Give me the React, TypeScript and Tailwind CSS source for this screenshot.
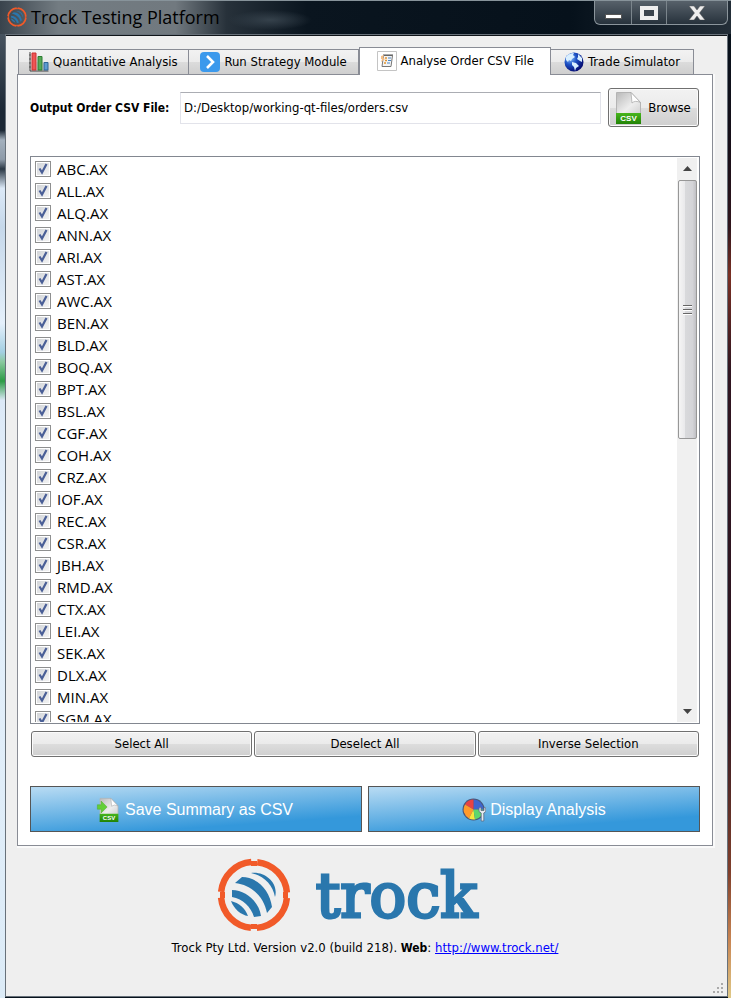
import { useState } from "react";

const SYMBOLS = [
  "ABC", "ALL", "ALQ", "ANN", "ARI", "AST", "AWC", "BEN", "BLD", "BOQ", "BPT", "BSL", "CGF",
  "COH", "CRZ", "IOF", "REC", "CSR", "JBH", "RMD", "CTX", "LEI", "SEK", "DLX", "MIN", "SGM",
].map((code) => `${code}.AX`);

function Emblem({ className }: { className: string }) {
  return (
    <svg viewBox="0 0 74 74" className={className} aria-hidden="true">
      <circle cx="37" cy="37" r="33" fill="none" stroke="#f15a29" strokeWidth="6.500" strokeDasharray="45.840 6" strokeDashoffset="-3" />
      <path d="M34 3h6v5h-6zM34 66h6v5h-6zM3 34h5v6H3zM66 34h5v6h-5z" fill="#f15a29" />
      <g fill="#2a77ad">
        <path d="M34 15C48 13 62 25 58 39C56 27 47 18 34 15Z" />
        <path d="M18 25L25 19C40 19 53 32 55 49L50 55C47 39 35 27 18 25Z" />
        <path d="M15 32C29 32 42 44 44 58L37 59C34 49 26 41 15 39Z" />
        <path d="M14 43C22 45 28 50 31 58C24 57 17 51 14 43Z" />
      </g>
    </svg>
  );
}

function ChartIcon() {
  return (
    <svg viewBox="0 0 20 20" className="size-5" aria-hidden="true">
      <path d="M1 0v19h18.500" stroke="#444" fill="none" />
      <path d="M0 3h2M0 7h2M0 11h2M0 15h2" stroke="#555" />
      <path d="M3 1h4v17H3z" fill="#ed5555" stroke="#c33" />
      <path d="M9 4.500h4V18H9z" fill="#55a957" stroke="#2d7d32" />
      <path d="M15 10.500h4V18h-4z" fill="#5c9bd1" stroke="#2c6595" />
    </svg>
  );
}

function ArrowIcon() {
  return (
    <svg viewBox="0 0 20 20" className="size-5" aria-hidden="true">
      <rect width="20" height="20" rx="4" fill="#3b99ec" />
      <path d="M7 4l6 6-6 6" fill="none" stroke="#fff" strokeWidth="2.600" />
    </svg>
  );
}

function ReportIcon() {
  return (
    <svg viewBox="0 0 20 20" className="size-5" aria-hidden="true">
      <path d="M.5.5h19v19H.5z" fill="#fff" stroke="#c4c4c4" />
      <path d="M6.500 4.500h9L14 15.500H5z" fill="#f4f4f4" stroke="#777" />
      <path d="M6 4h10" stroke="#555" />
      <path d="M8 7h2M8 9.500h2M7 12h2" stroke="#e29530" strokeWidth="1.500" />
      <path d="M11 7h3M11 9.500h3M10 12h3" stroke="#4b87c5" />
      <path d="M4 5l3-1-1 3 2 1-4 3 1-3H4z" fill="#f5bd83" />
    </svg>
  );
}

function GlobeIcon() {
  return (
    <svg viewBox="0 0 20 20" className="size-5" aria-hidden="true">
      <defs>
        <radialGradient id="globe" cx=".3" cy=".3" r=".75">
          <stop stopColor="#8cc5ff" />
          <stop offset=".45" stopColor="#1d51c4" />
          <stop offset="1" stopColor="#050b72" />
        </radialGradient>
      </defs>
      <circle cx="10" cy="10" r="9.500" fill="url(#globe)" />
      <path d="M2 5C4 2 7 1 10 1L9 3l2 2-3 2-1 2-2-1-1 2-2-2zM8 10l4 1 3 3-3 2-1 3-1-4-2-2zM14 2l4 4v4l-2-1-3-2 1-2z" fill="#d9efff" />
    </svg>
  );
}

function CsvIcon({ className, arrow = false }: { className: string; arrow?: boolean }) {
  return (
    <svg viewBox="0 0 25 32" className={className} aria-hidden="true">
      <defs>
        <linearGradient id="sheet" x2="1" y2="1">
          <stop stopColor="#b9b9b9" />
          <stop offset=".6" stopColor="#ededed" />
          <stop offset="1" stopColor="#d0d0d0" />
        </linearGradient>
        <linearGradient id="band" x2="0" y2="1">
          <stop stopColor="#47b51c" />
          <stop offset="1" stopColor="#218306" />
        </linearGradient>
      </defs>
      <path d="M.5.5H15l9.500 10V22H.5z" fill="url(#sheet)" stroke="#b4b4b4" />
      <path d="M15 .5l9.500 10Q19 8 16 11z" fill="#fff" stroke="#a5a5a5" strokeWidth=".7" />
      <path d="M0 21h25v11H0z" fill="url(#band)" />
      <text x="12.500" y="29" fontSize="8" fontWeight="700" fontFamily="Liberation Sans, sans-serif" textAnchor="middle" fill="#fff">CSV</text>
      {arrow && <path d="M-3 9h5V4l8 8-8 8v-5h-5z" fill="#62cf36" stroke="#4ca82a" strokeWidth=".6" />}
    </svg>
  );
}

function PieIcon() {
  return (
    <svg viewBox="0 0 24 24" className="size-6" aria-hidden="true">
      <circle cx="11.500" cy="11.500" r="11" fill="#49577a" />
      <path d="M11.500 11.500V1.500A10 10 0 0 1 21.500 11.500z" fill="#3e65cd" />
      <path d="M11.500 11.500L3 6.500A10 10 0 0 1 11.500 1.500z" fill="#e74343" />
      <path d="M11.500 11.500L7 20.400A10 10 0 0 1 3 6.500z" fill="#ff9a2b" />
      <path d="M11.500 11.500L13 21.400A10 10 0 0 1 7 20.400z" fill="#f7e73c" />
      <path d="M11.500 11.500H21.500A10 10 0 0 1 13 21.400z" fill="#5ed66d" />
      <path d="M17 10v3.500l2.200 1.500v8h2.600v-8l2-1.500V10l-1.800-1v3.500h-3V9z" fill="#e6eaf0" stroke="#5c6b80" strokeWidth=".8" />
    </svg>
  );
}

const TABS = [
  { label: "Quantitative Analysis", icon: <ChartIcon />, grow: "grow-[170]" },
  { label: "Run Strategy Module", icon: <ArrowIcon />, grow: "grow-[171]" },
  { label: "Analyse Order CSV File", icon: <ReportIcon />, grow: "grow-[191]" },
  { label: "Trade Simulator", icon: <GlobeIcon />, grow: "grow-[143]" },
];

const GREY_BUTTON =
  "flex items-center justify-center rounded-[3px] border border-[#707070] bg-[linear-gradient(#f2f2f2,#ebebeb_50%,#dddddd_50%,#cfcfcf)] shadow-[inset_0_0_0_1px_#fbfbfb]";
const BLUE_BUTTON =
  "flex h-[46px] flex-1 items-center justify-center border border-[#555] bg-[linear-gradient(356deg,#3498db_22%,#b2d8f2_96%)] pt-px font-['Liberation_Sans',Arial,sans-serif] text-base text-white";

export default function App() {
  const [activeTab, setActiveTab] = useState(2);
  const [checked, setChecked] = useState<boolean[]>(SYMBOLS.map(() => true));
  const [path, setPath] = useState("D:/Desktop/working-qt-files/orders.csv");

  return (
    <div className="flex h-screen min-h-[600px] flex-col overflow-hidden bg-[#07121c] font-['DejaVu_Sans_Condensed','DejaVu_Sans',sans-serif] text-[13px] text-black">
      <header className="flex h-[34px] shrink-0 items-start justify-between border-t border-[#87939a] bg-[radial-gradient(ellipse_42px_10px_at_270px_19px,#35414b,transparent),linear-gradient(90deg,#39434c,#737c82_8%,#71797f_24%,#27313a_31%,#0a151f_42%,#06111b_78%,#232e38)] pl-[7px] pr-[3px]">
        <div className="flex h-8 items-center gap-1">
          <Emblem className="size-5" />
          <h1 className="font-['Open_Sans','Noto_Sans',sans-serif] text-lg">Trock Testing Platform</h1>
        </div>
        <div className="flex h-6 rounded-b-md border border-t-0 border-[#8b959c] bg-[linear-gradient(#57616a,#27323c)]">
          <button aria-label="Minimise" className="flex w-[37px] items-end justify-center border-r border-[#7b858c] pb-[5px]">
            <span className="h-[5px] w-[17px] border border-[#555] bg-white" />
          </button>
          <button aria-label="Maximise" className="flex w-[35px] items-center justify-center border-r border-[#7b858c]">
            <span className="h-[14px] w-[18px] border-4 border-[#eee] bg-[#3b444d]" />
          </button>
          <button aria-label="Close" className="flex w-[60px] items-center justify-center">
            <svg viewBox="0 0 18 14" className="h-[14px] w-[18px]" aria-hidden="true">
              <path d="M1 0h5l3 4 3-4h5l-5.500 7L17 14h-5l-3-4-3 4H1l5.500-7z" fill="#eee" stroke="#555" strokeWidth=".5" />
            </svg>
          </button>
        </div>
      </header>

      <div className="flex min-h-0 flex-1">
        <div className="w-[5px] shrink-0 bg-[linear-gradient(#47535f,#1c2835_8%,#1c2835_10%,#a3b0bd_11%,#8d9aa8_13%,#2a3744_14%,#dce9f7_16%,#c6d8ea_20%,#e5f0fb_30%,#a3cfe2_33%,#8ac99f_34%,#2c9b45_36%,#dce9f7_38%,#e5f0fb_50%,#dcebf7)]" />
        <main className="relative mb-px flex min-w-0 flex-1 flex-col border border-[#68717a] bg-[#efefef] pl-[11px] pr-[14px] shadow-[inset_0_1px_0_#10151a]">
          <div role="tablist" className="relative z-10 -mb-px ml-px mr-[19px] mt-3 flex h-[28px] shrink-0 items-end">
            {TABS.map((tab, index) => {
              const active = index === activeTab;
              return (
                <button
                  key={tab.label}
                  role="tab"
                  aria-selected={active}
                  onClick={() => setActiveTab(index)}
                  className={`flex basis-0 items-center justify-center gap-[4px] whitespace-nowrap border border-[#898c95] ${tab.grow} ${
                    active
                      ? "h-[28px] border-b-0 bg-white pb-[2px]"
                      : "h-[26px] border-l-0 bg-[linear-gradient(#f2f2f2,#ebebeb_50%,#dcdcdc_50%,#cfcfcf)] first:border-l"
                  }`}
                >
                  {tab.icon}
                  {tab.label}
                </button>
              );
            })}
          </div>

          <section className="flex min-h-0 flex-1 flex-col border border-[#898c95] bg-white px-3 pb-[13px] pt-[13px] shadow-[1px_1px_0_1px_#fafafa]">
            <div className="flex shrink-0 items-center">
              <label htmlFor="path" className="w-[150px] whitespace-nowrap text-xs font-bold">Output Order CSV File:</label>
              <input
                id="path"
                value={path}
                onChange={(event) => setPath(event.target.value)}
                className="h-[32px] min-w-0 flex-1 border border-[#e2e3ea] border-t-[#abadb3] bg-white px-[3px] outline-none"
              />
              <button className={`${GREY_BUTTON} ml-[7px] mr-px h-[39px] w-[91px] gap-[7px]`}>
                <CsvIcon className="h-8 w-[25px]" />
                Browse
              </button>
            </div>

            <div className="mt-[29px] flex min-h-0 flex-1 border border-[#828790] p-px">
              <ul className="min-w-0 flex-1 overflow-hidden pl-[3px] font-['Open_Sans','Noto_Sans',sans-serif] text-[15px]">
                {SYMBOLS.map((symbol, index) => (
                  <li key={symbol}>
                    <label className="flex h-[22px] items-center gap-[6px]">
                      <span className="grid size-4 place-items-center border border-[#8e8f8f] bg-[linear-gradient(135deg,#cfd2d6,#f6f6f6)] shadow-[inset_0_0_0_1px_#fff]">
                        <input
                          type="checkbox"
                          checked={checked[index]}
                          onChange={() => setChecked(checked.map((on, i) => (i === index ? !on : on)))}
                          className="peer col-start-1 row-start-1 size-[14px] appearance-none"
                        />
                        <svg viewBox="0 0 14 14" className="pointer-events-none invisible col-start-1 row-start-1 size-[14px] peer-checked:visible" aria-hidden="true">
                          <path d="M3.500 6.500l2.500 4 4.500-8.500" fill="none" stroke="#4a5f97" strokeWidth="2.200" />
                        </svg>
                      </span>
                      {symbol}
                    </label>
                  </li>
                ))}
              </ul>
              <div className="mr-px flex w-5 shrink-0 flex-col items-center bg-[#f0f0f0]" aria-hidden="true">
                <svg viewBox="0 0 9 5" className="mb-[9px] mt-2 h-[5px] w-[9px]">
                  <path d="M0 5L4.500 0L9 5z" fill="#444" />
                </svg>
                <div className="flex h-[46%] w-[19px] flex-col items-center justify-center gap-[2px] rounded-xs border border-[#979797] bg-[linear-gradient(90deg,#f5f5f5,#e9e9eb_35%,#d9dadc_36%,#d4d4d8_80%,#c0c0c4)]">
                  <span className="h-[2px] w-[9px] border-b border-white bg-[#666]" />
                  <span className="h-[2px] w-[9px] border-b border-white bg-[#666]" />
                  <span className="h-[2px] w-[9px] border-b border-white bg-[#666]" />
                </div>
                <svg viewBox="0 0 9 5" className="mb-2 mt-auto h-[5px] w-[9px]">
                  <path d="M0 0L4.500 5L9 0z" fill="#444" />
                </svg>
              </div>
            </div>

            <div className="mx-px mt-[7px] flex shrink-0 gap-[2px]">
              <button className={`${GREY_BUTTON} h-[26px] flex-1`} onClick={() => setChecked(SYMBOLS.map(() => true))}>Select All</button>
              <button className={`${GREY_BUTTON} h-[26px] flex-1`} onClick={() => setChecked(SYMBOLS.map(() => false))}>Deselect All</button>
              <button className={`${GREY_BUTTON} h-[26px] flex-1`} onClick={() => setChecked(checked.map((on) => !on))}>Inverse Selection</button>
            </div>

            <div className="mt-[29px] flex shrink-0 gap-[6px]">
              <button className={`${BLUE_BUTTON} gap-[6px]`}>
                <CsvIcon className="h-6 w-5 overflow-visible" arrow />
                Save Summary as CSV
              </button>
              <button className={`${BLUE_BUTTON} gap-[4px]`}>
                <PieIcon />
                Display Analysis
              </button>
            </div>
          </section>

          <footer className="flex h-[150px] shrink-0 flex-col items-center pt-3">
            <div className="flex items-center gap-[25px] pr-9">
              <Emblem className="size-[74px]" />
              <span className="pt-px font-['DejaVu_Serif',serif] text-[61px] leading-[70px] text-[#2a77ad] [-webkit-text-stroke:3px_#2a77ad]">trock</span>
            </div>
            <p className="mt-[6px]">
              Trock Pty Ltd. Version v2.0 (build 218). <b className="text-xs">Web</b>:{" "}
              <a href="http://www.trock.net/" className="text-[#0000ff] underline">http://www.trock.net/</a>
            </p>
          </footer>
          <svg viewBox="0 0 12 12" className="absolute bottom-[2px] right-[3px] size-3" aria-hidden="true">
            <path d="M9 1h2v2H9zM5 5h2v2H5zM9 5h2v2H9zM1 9h2v2H1zM5 9h2v2H5zM9 9h2v2H9z" fill="#aaa" />
          </svg>
        </main>
        <div className="w-[3px] shrink-0 bg-[linear-gradient(#07121c,#180e18_12%,#30151c_20%,#7a3024_25%,#301520_35%,#2c1420_70%,#81402c_87%,#c88553_94%,#e0c987)]" />
      </div>
    </div>
  );
}
